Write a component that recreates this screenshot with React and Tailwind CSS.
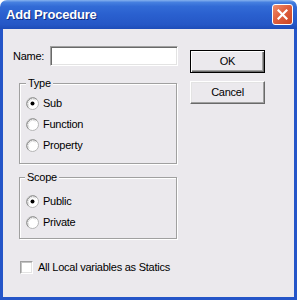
import React from 'react'

const font = { fontFamily: '"Liberation Sans", Arial, sans-serif' }

const Radio = ({ checked, label }) => (
  <div className="flex h-[13px] items-center gap-[4px]">
    <svg width="13" height="13" viewBox="0 0 13 13" className="shrink-0">
      <circle cx="6.5" cy="6.5" r="6" fill="#fff" stroke="#b5b5b5" />
      <path d="M2.3 10.7 A6 6 0 0 1 10.7 2.3" fill="none" stroke="#8a8a8a" strokeWidth="1" />
      <path d="M3.2 9.8 A4.7 4.7 0 0 1 9.8 3.2" fill="none" stroke="#dcdcdc" strokeWidth="1" />
      {checked && <circle cx="6.5" cy="6.5" r="2" fill="#000" />}
    </svg>
    <span className="text-[11px] leading-[13px] tracking-[-0.25px] text-black">{label}</span>
  </div>
)

const GroupBox = ({ title, titleLeft, className, children }) => (
  <div
    className={`relative ml-[6px] w-[158px] border border-[#a0a0a0] shadow-[inset_1px_1px_0_#fff,1px_1px_0_#fff] ${className}`}
  >
    <span
      className={`absolute top-[-7px] ${titleLeft} bg-[#ebe9ed] px-[2px] text-[11px] leading-[13px] tracking-[-0.25px] text-black`}
    >
      {title}
    </span>
    {children}
  </div>
)

const Button = ({ children, isDefault }) => (
  <button
    className={`flex h-[23px] w-[75px] items-center justify-center bg-[#ebe9ed] text-[11px] tracking-[-0.25px] text-black ${
      isDefault
        ? 'border border-black shadow-[inset_1px_1px_0_#fff,inset_-1px_-1px_0_#696969,inset_-2px_-2px_0_#a0a0a0]'
        : 'border border-t-white border-l-white border-r-[#696969] border-b-[#696969] shadow-[inset_-1px_-1px_0_#a0a0a0,inset_1px_1px_0_#e3e3e3]'
    }`}
  >
    {children}
  </button>
)

export default function App() {
  return (
    <div className="h-[300px] w-[297px] bg-white" style={font}>
      <div className="flex h-full w-full flex-col overflow-hidden rounded-t-[7px]">
        {/* title bar */}
        <div className="flex h-[29px] shrink-0 items-center justify-between bg-[linear-gradient(to_bottom,#86b2ee_0%,#4680e0_8%,#326bd6_22%,#2a60cf_50%,#2557c6_85%,#1e4cb8_100%)] pl-[6px] pr-[4px]">
          <span className="text-[13px] font-bold leading-none tracking-[-0.2px] text-white [text-shadow:1px_1px_0_#0d2a80]">
            Add Procedure
          </span>
          <div className="flex h-[21px] w-[21px] items-center justify-center rounded-[3px] border border-white bg-[linear-gradient(135deg,#f08d6c_0%,#e0603f_45%,#cb4522_100%)]">
            <svg width="11" height="11" viewBox="0 0 11 11">
              <path d="M1.5 1.5 L9.5 9.5 M9.5 1.5 L1.5 9.5" stroke="#fff" strokeWidth="2.2" strokeLinecap="square" />
            </svg>
          </div>
        </div>

        {/* body */}
        <div className="flex flex-1 border-x-[3px] border-b-[3px] border-[#2455c8] bg-[#ebe9ed] pl-[10px] pt-[17px]">
          <div className="flex w-[165px] flex-col">
            <div className="flex h-[20px] items-center justify-between">
              <span className="text-[11px] tracking-[-0.25px] text-black">Name:</span>
              <div className="h-[20px] w-[128px] border border-t-[#a0a0a0] border-l-[#a0a0a0] border-r-white border-b-white bg-white shadow-[inset_1px_1px_0_#696969,inset_-1px_-1px_0_#e3e3e3]" />
            </div>

            <GroupBox title="Type" titleLeft="left-[6px]" className="mt-[17px] pb-[11px] pl-[6px] pt-[13px]">
              <div className="flex flex-col gap-[8px]">
                <Radio checked label="Sub" />
                <Radio label="Function" />
                <Radio label="Property" />
              </div>
            </GroupBox>

            <GroupBox title="Scope" titleLeft="left-[5px]" className="mt-[13px] pb-[9px] pl-[6px] pt-[17px]">
              <div className="flex flex-col gap-[8px]">
                <Radio checked label="Public" />
                <Radio label="Private" />
              </div>
            </GroupBox>

            <div className="ml-[7px] mt-[22px] flex h-[13px] items-center gap-[5px]">
              <div className="h-[13px] w-[13px] shrink-0 border border-t-[#a0a0a0] border-l-[#a0a0a0] border-r-white border-b-white bg-white shadow-[inset_1px_1px_0_#c4c4c4,inset_-1px_-1px_0_#e3e3e3]" />
              <span className="text-[11px] leading-[13px] tracking-[-0.25px] text-black">All Local variables as Statics</span>
            </div>
          </div>

          <div className="ml-[12px] flex flex-col gap-[8px] pt-[4px]">
            <Button isDefault>OK</Button>
            <Button>Cancel</Button>
          </div>
        </div>
      </div>
    </div>
  )
}
